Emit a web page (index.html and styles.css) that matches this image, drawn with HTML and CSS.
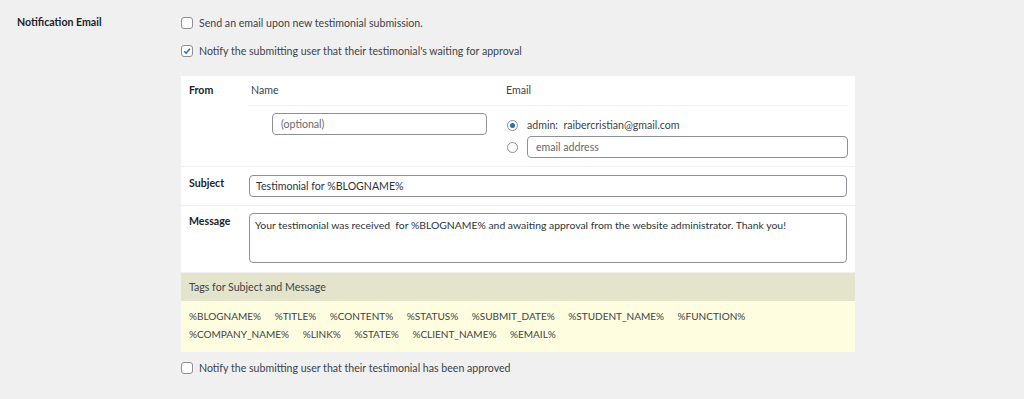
FILE: index.html
```html
<!DOCTYPE html>
<html lang="en">
<head>
    <meta charset="UTF-8">
    <title>Testimonial settings</title>
    <link rel="stylesheet" href="styles.css">
</head>
<body>
    <div class="settings">
        <div class="settings-label">Notification Email</div>
        <div class="settings-field">
            <label class="check-line">
                <span class="checkbox"></span>
                Send an email upon new testimonial submission.
            </label>
            <label class="check-line">
                <span class="checkbox is-checked">
                    <svg viewBox="0 0 12 12"><path d="M2.6 6.3 L5 8.7 L9.5 3.3"/></svg>
                </span>
                Notify the submitting user that their testimonial's waiting for approval
            </label>

            <div class="mail-box">
                <div class="mail-row from-row">
                    <div class="mail-label">From</div>
                    <div class="from-grid">
                        <div class="from-head">Name</div>
                        <div class="from-head">Email</div>
                        <div class="name-cell">
                            <input class="text-input name-input" type="text" placeholder="(optional)">
                        </div>
                        <div class="email-cell">
                            <label class="radio-line">
                                <span class="radio is-checked"></span>
                                admin:&nbsp; raibercristian@gmail.com
                            </label>
                            <label class="radio-line">
                                <span class="radio"></span>
                                <input class="text-input email-input" type="text" placeholder="email address">
                            </label>
                        </div>
                    </div>
                </div>

                <div class="mail-row subject-row">
                    <div class="mail-label">Subject</div>
                    <input class="text-input wide-input" type="text" value="Testimonial for %BLOGNAME%">
                </div>

                <div class="mail-row message-row">
                    <div class="mail-label">Message</div>
                    <textarea class="text-input message-input">Your testimonial was received  for %BLOGNAME% and awaiting approval from the website administrator. Thank you!</textarea>
                </div>

                <div class="tags-head">Tags for Subject and Message</div>
                <div class="tags-body">
                    <span class="tag">%BLOGNAME%</span>
                    <span class="tag">%TITLE%</span>
                    <span class="tag">%CONTENT%</span>
                    <span class="tag">%STATUS%</span>
                    <span class="tag">%SUBMIT_DATE%</span>
                    <span class="tag">%STUDENT_NAME%</span>
                    <span class="tag">%FUNCTION%</span>
                    <br>
                    <span class="tag">%COMPANY_NAME%</span>
                    <span class="tag">%LINK%</span>
                    <span class="tag">%STATE%</span>
                    <span class="tag">%CLIENT_NAME%</span>
                    <span class="tag">%EMAIL%</span>
                </div>
            </div>

            <label class="check-line last-check">
                <span class="checkbox"></span>
                Notify the submitting user that their testimonial has been approved
            </label>
        </div>
    </div>
</body>
</html>
```

FILE: styles.css
```css
body {
    margin: 0;
    background: #f0f0f1;
    color: #3c434a;
    font-family: Lato, "Open Sans", sans-serif;
    font-size: 10.6px;
    line-height: 16px;
}

.settings {
    display: flex;
    padding-left: 17px;
}

.settings-label {
    width: 164px;
    padding-top: 14px;
    font-weight: 700;
    color: #1d2327;
}

.settings-field {
    width: 674px;
    padding-top: 15px;
}

.check-line {
    display: flex;
    align-items: center;
    gap: 6px;
    height: 16px;
    margin-bottom: 12px;
}

.checkbox {
    box-sizing: border-box;
    width: 12px;
    height: 12px;
    border: 1px solid #8c8f94;
    border-radius: 3px;
    background: #fff;
    display: flex;
    align-items: center;
    justify-content: center;
}

.checkbox svg {
    width: 10px;
    height: 10px;
    fill: none;
    stroke: #2271b1;
    stroke-width: 1.8;
}

.mail-box {
    margin-top: 17px;
    background: #fff;
}

.mail-row {
    display: flex;
    border-bottom: 1px solid #f0f0f1;
}

.mail-label {
    box-sizing: border-box;
    width: 68px;
    flex-shrink: 0;
    padding-left: 8px;
    font-weight: 700;
    color: #1d2327;
}

.from-row .mail-label {
    width: 67px;
    padding-top: 6px;
}

.from-grid {
    flex: 1;
    display: grid;
    grid-template-columns: 255px 1fr;
    margin-right: 7px;
}

.from-head {
    padding: 6px 0 7px 3px;
    border-bottom: 1px solid #f0f0f1;
}

.name-cell {
    padding: 7px 0 0 24px;
}

.name-input {
    width: 215px;
}

.email-cell {
    padding: 8px 0 8px 4px;
}

.radio-line {
    display: flex;
    align-items: center;
    gap: 9px;
    height: 22px;
}

.radio {
    box-sizing: border-box;
    width: 11px;
    height: 11px;
    border: 1px solid #8c8f94;
    border-radius: 50%;
    background: #fff;
    display: flex;
    align-items: center;
    justify-content: center;
}

.radio.is-checked::after {
    content: "";
    width: 5px;
    height: 5px;
    border-radius: 50%;
    background: #2271b1;
}

.text-input {
    box-sizing: border-box;
    height: 22px;
    margin: 0;
    padding: 0 8px;
    border: 1px solid #8c8f94;
    border-radius: 4px;
    background: #fff;
    color: #2c3338;
    font-family: inherit;
    font-size: 10.6px;
}

.text-input::placeholder {
    color: #646970;
}

.email-input {
    flex: 1;
}

.subject-row {
    padding: 8px 0;
}

.subject-row .mail-label,
.message-row .mail-label {
    padding-top: 0;
}

.wide-input {
    width: 598px;
    padding-left: 6px;
}

.message-row {
    padding: 7px 0 9px;
}

.message-input {
    width: 598px;
    height: 50px;
    padding: 3px 5px;
    font-size: 10.4px;
    line-height: 16px;
    resize: none;
}

.tags-head {
    height: 28px;
    line-height: 28px;
    padding-left: 8px;
    background: #e4e4cd;
}

.tags-body {
    padding: 6px 8px 9px;
    font-size: 10px;
    line-height: 18px;
    background: #fefddf;
}

.tag {
    margin-right: 11px;
}

.last-check {
    margin-top: 8px;
}
```
